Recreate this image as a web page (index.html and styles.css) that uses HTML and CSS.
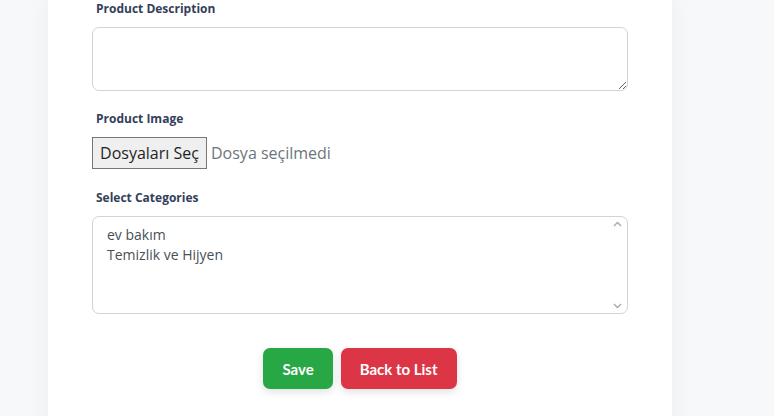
FILE: index.html
```html
<!DOCTYPE html>
<html lang="tr">
<head>
<meta charset="utf-8">
<title>Product Form</title>
<link rel="stylesheet" href="styles.css">
</head>
<body>
<main class="card">
  <form class="form">
    <div class="group">
      <label class="label" for="desc">Product Description</label>
      <textarea id="desc" class="textarea"></textarea>
    </div>
    <div class="group group-file">
      <label class="label">Product Image</label>
      <div class="file">
        <span class="file-btn">Dosyaları Seç</span>
        <span class="file-text">Dosya seçilmedi</span>
      </div>
    </div>
    <div class="group group-select">
      <label class="label" for="cats">Select Categories</label>
      <div class="select-wrap">
        <select id="cats" class="select" multiple>
          <option>ev bakım</option>
          <option>Temizlik ve Hijyen</option>
        </select>
        <svg class="arrow arrow-up" width="9" height="6" viewBox="0 0 9 6" aria-hidden="true"><path d="M1 5 L4.5 1.5 L8 5" fill="none" stroke="#a8a8a8" stroke-width="1.4"/></svg>
        <svg class="arrow arrow-down" width="9" height="6" viewBox="0 0 9 6" aria-hidden="true"><path d="M1 1 L4.5 4.5 L8 1" fill="none" stroke="#a8a8a8" stroke-width="1.4"/></svg>
      </div>
    </div>
    <div class="actions">
      <button type="button" class="btn btn-save">Save</button>
      <button type="button" class="btn btn-back">Back to List</button>
    </div>
  </form>
</main>
</body>
</html>
```
FILE: styles.css
```css
html, body {
  margin: 0;
  padding: 0;
}
body {
  background: #f7f8fa;
  font-family: "Open Sans", "Liberation Sans", sans-serif;
  height: 416px;
  overflow: hidden;
}
.card {
  margin-left: 48px;
  width: 624px;
  box-sizing: border-box;
  padding: 1px 44px 40px;
  background: #fff;
  min-height: 416px;
  box-shadow: 0 0 24px rgba(30, 40, 60, 0.05);
}
.form {
  display: flex;
  flex-direction: column;
}
.group {
  display: flex;
  flex-direction: column;
}
.group-file {
  margin-top: 20px;
}
.group-select {
  margin-top: 21px;
}
.label {
  display: block;
  font-size: 12px;
  line-height: 16px;
  font-weight: 700;
  color: #34405a;
  padding-left: 4px;
  margin-bottom: 10px;
}
.textarea {
  box-sizing: border-box;
  width: 536px;
  height: 64px;
  border: 1px solid #d3d3d3;
  border-radius: 7px;
  font-family: inherit;
  margin: 0;
  padding: 6px 12px;
}
.file {
  display: flex;
  align-items: center;
  height: 32px;
}
.file-btn {
  box-sizing: border-box;
  height: 32px;
  width: 115px;
  display: flex;
  align-items: center;
  justify-content: center;
  background: #efefef;
  border: 1px solid #767676;
  font-size: 16px;
  color: #1f1f1f;
}
.file-text {
  margin-left: 4px;
  font-size: 16px;
  color: #6c757d;
}
.select-wrap {
  position: relative;
  width: 536px;
  height: 98px;
}
.select {
  box-sizing: border-box;
  width: 536px;
  height: 98px;
  border: 1px solid #d3d3d3;
  border-radius: 7px;
  margin: 0;
  padding: 8px 12px;
  font-family: inherit;
  font-size: 14px;
  color: #495057;
  background: #fff;
  outline: none;
}
.select option {
  padding: 0 2px;
  line-height: 20px;
  min-height: 20px;
}
.arrow {
  position: absolute;
  right: 6px;
}
.arrow-up {
  top: 5px;
}
.arrow-down {
  bottom: 5px;
}
.actions {
  display: flex;
  justify-content: center;
  gap: 8px;
  margin-top: 34px;
}
.btn {
  height: 41px;
  padding: 0 19px;
  border: none;
  border-radius: 7px;
  color: #fff;
  font-family: "Lato", "Open Sans", sans-serif;
  font-weight: 700;
  font-size: 15px;
  box-shadow: 0 3px 8px rgba(0, 0, 0, 0.12);
  cursor: pointer;
}
.btn-save {
  background: #28a745;
}
.btn-back {
  background: #dc3545;
}
```
